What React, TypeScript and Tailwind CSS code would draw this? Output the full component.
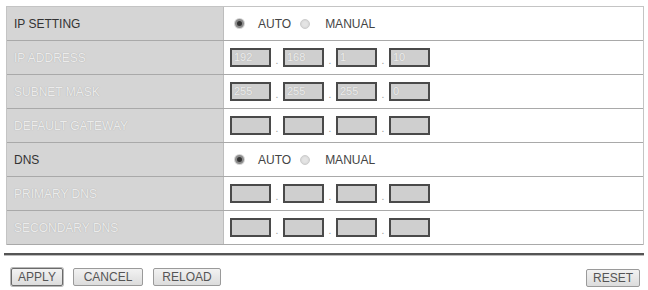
type Row =
  | { kind: "radio"; label: string }
  | { kind: "ip"; label: string; values: string[] };

const rows: Row[] = [
  { kind: "radio", label: "IP SETTING" },
  { kind: "ip", label: "IP ADDRESS", values: ["192", "168", "1", "10"] },
  { kind: "ip", label: "SUBNET MASK", values: ["255", "255", "255", "0"] },
  { kind: "ip", label: "DEFAULT GATEWAY", values: ["", "", "", ""] },
  { kind: "radio", label: "DNS" },
  { kind: "ip", label: "PRIMARY DNS", values: ["", "", "", ""] },
  { kind: "ip", label: "SECONDARY DNS", values: ["", "", "", ""] },
];

const RadioGroup = () => (
  <div className="flex items-center pl-[11px] text-[12px] text-[#444]">
    <span className="w-[9px] h-[9px] rounded-full bg-[#333] border-2 border-[#8c8c8c] shadow-[0_0_0_1px_#d4d4d4]" />
    <span className="ml-[14px]">AUTO</span>
    <span className="ml-[9px] w-[10px] h-[10px] rounded-full bg-[#e4e4e4] border border-[#cdcdcd] shadow-[inset_0_0_2px_#c4c4c4]" />
    <span className="ml-[15px]">MANUAL</span>
  </div>
);

const IpFields = ({ values }: { values: string[] }) => (
  <div className="flex items-center pl-[6px]">
    {values.map((v, i) => (
      <div key={i} className="flex items-center">
        {i > 0 && (
          <span className="w-[12px] text-center text-[10px] leading-none text-[#9a9a9a] pt-[6px]">.</span>
        )}
        <div className="w-[41px] h-[19px] border-2 border-[#4a4a4a] bg-[#cfcfcf] text-[11px] leading-[15px] pl-[2px] text-[#ededed] [text-shadow:0_0_1px_#a8a8a8]">
          {v}
        </div>
      </div>
    ))}
  </div>
);

const Button = ({ label, w, focus }: { label: string; w: string; focus?: boolean }) => (
  <button
    className={`${w} h-[18px] rounded-[2px] bg-gradient-to-b from-[#f2f2f2] to-[#dcdcdc] text-[12px] leading-none text-[#555] border ${
      focus ? "border-[#6a6a6a] shadow-[0_0_0_1px_#b8b8b8]" : "border-[#9a9a9a]"
    }`}
  >
    {label}
  </button>
);

export default function App() {
  return (
    <div
      className="w-[648px] h-[290px] bg-white pt-[6px]"
      style={{ fontFamily: '"Liberation Sans", Arial, sans-serif' }}
    >
      <div className="ml-[6px] w-[638px] border-t border-r border-l border-[#c4c4c4]">
        {rows.map((r) => (
          <div key={r.label} className="flex h-[34px] border-b border-[#a9a9a9]">
            <div
              className={`w-[217px] flex items-center pl-[7px] bg-[#d5d5d5] border-r border-[#bdbdbd] text-[12px] ${
                r.kind === "radio" ? "text-[#333]" : "text-[#ececec] [text-shadow:0_0_1px_#a0a0a0]"
              }`}
            >
              {r.label}
            </div>
            <div className="flex-1 flex items-center bg-white">
              {r.kind === "radio" ? <RadioGroup /> : <IpFields values={r.values} />}
            </div>
          </div>
        ))}
      </div>
      <div className="mt-[8px] mx-[4px] h-[3px] bg-[#555] border-b border-[#bbb]" />
      <div className="flex items-center mt-[9px] pl-[11px] pr-[8px]">
        <div className="flex gap-[10px]">
          <Button label="APPLY" w="w-[52px]" focus />
          <Button label="CANCEL" w="w-[70px]" />
          <Button label="RELOAD" w="w-[68px]" />
        </div>
        <div className="ml-auto">
          <Button label="RESET" w="w-[54px]" />
        </div>
      </div>
    </div>
  );
}
